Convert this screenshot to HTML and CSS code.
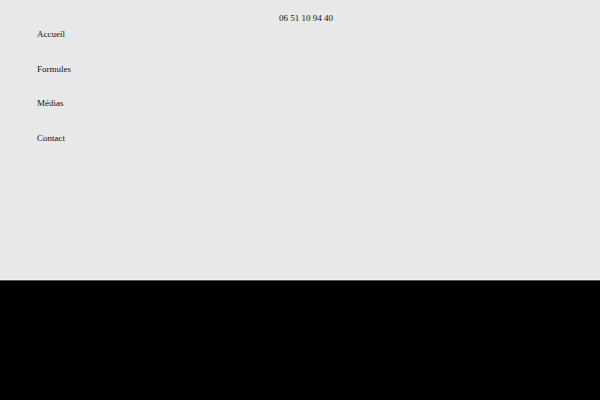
FILE: index.html
```html
<!DOCTYPE html>
<html lang="fr">
<head>
<meta charset="utf-8">
<title>Menu</title>
<link rel="stylesheet" href="styles.css">
</head>
<body>
<div class="panel">
  <div class="phone">06 51 10 94 40</div>
  <nav class="menu">
    <a class="item item-first" href="#">Accueil</a>
    <a class="item" href="#">Formules</a>
    <a class="item" href="#">Médias</a>
    <a class="item" href="#">Contact</a>
  </nav>
</div>
<div class="edge-light"></div>
<div class="edge-dark"></div>
</body>
</html>
```
FILE: styles.css
```css
html, body {
  margin: 0;
  padding: 0;
  background: #000;
  height: 100%;
}
body {
  font-family: "Liberation Serif", "Times New Roman", serif;
  font-size: 9px;
  color: #111;
}
.panel {
  position: relative;
  height: 262px;
  padding-top: 17px;
  background: #e8e8e8;
}
.phone {
  position: absolute;
  top: 13px;
  left: 279px;
  line-height: 11px;
}
.menu {
  display: flex;
  flex-direction: column;
}
.item {
  display: flex;
  align-items: center;
  height: 34.5px;
  padding-left: 37px;
  color: #111;
  text-decoration: none;
}
.item-first {
  height: 33.5px;
  border-bottom: 1px solid #e1e1e1;
}
.edge-light {
  height: 1px;
  background: #f4f4f4;
}
.edge-dark {
  height: 1px;
  background: #555;
}
```
